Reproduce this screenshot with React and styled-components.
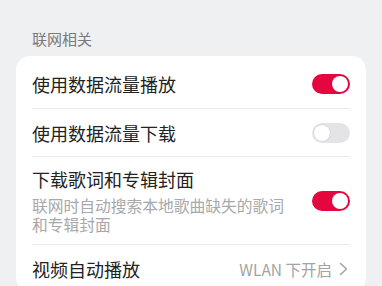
import React from "react";
import styled, { createGlobalStyle } from "styled-components";

const Global = createGlobalStyle`
  html, body { margin: 0; padding: 0; background: #eff0f2; }
  body {
    font-family: "Noto Sans CJK SC", "Noto Sans", sans-serif;
    -webkit-font-smoothing: antialiased;
  }
`;

const Page = styled.div`
  width: 382px;
  height: 286px;
  overflow: hidden;
  padding: 0 16px;
  box-sizing: border-box;
  background: #eff0f2;
`;

const SectionLabel = styled.div`
  padding: 28px 16px 6px;
  font-size: 15px;
  line-height: 22px;
  color: #7a7a7c;
`;

const Card = styled.div`
  background: #fff;
  border-radius: 14px;
  padding: 4px 16px 0;
`;

const Row = styled.div`
  display: flex;
  align-items: center;
  gap: 12px;
  min-height: ${(p) => (p.$tall ? 86 : 48)}px;
  box-sizing: border-box;
  padding: ${(p) => (p.$tall ? "10px 0" : "0")};
  border-top: ${(p) => (p.$first ? "none" : "1px solid #ececec")};
`;

const Texts = styled.div`
  flex: 1;
  min-width: 0;
  display: flex;
  flex-direction: column;
`;

const Title = styled.div`
  font-size: 18px;
  line-height: 24px;
  color: #222;
`;

const Sub = styled.div`
  margin-top: 6px;
  font-size: 15.75px;
  line-height: 18.5px;
  color: #a8a8aa;
  max-width: 264px;
`;

const Track = styled.div`
  position: relative;
  flex: none;
  width: 38px;
  height: 20px;
  border-radius: 10px;
  background: ${(p) => (p.$on ? "#e6063f" : "#e4e4e6")};
`;

const Knob = styled.div`
  position: absolute;
  top: 2px;
  left: ${(p) => (p.$on ? "20px" : "2px")};
  width: 16px;
  height: 16px;
  border-radius: 50%;
  background: #fff;
  box-shadow: 0 0 0 0.5px rgba(0, 0, 0, 0.12);
`;

const Value = styled.div`
  display: flex;
  align-items: center;
  gap: 6px;
  font-size: 15.5px;
  color: #a3a3a5;
  flex: none;
  margin-right: 2px;
`;

const Toggle = ({ on }) => (
  <Track $on={on}>
    <Knob $on={on} />
  </Track>
);

const Chevron = () => (
  <svg width="10" height="14" viewBox="0 0 10 14">
    <polyline
      points="2.5,1.5 8.5,7 2.5,12.5"
      fill="none"
      stroke="#a3a3a5"
      strokeWidth="1.6"
      strokeLinecap="round"
      strokeLinejoin="round"
    />
  </svg>
);

export default function App() {
  return (
    <Page>
      <Global />
      <SectionLabel>联网相关</SectionLabel>
      <Card>
        <Row $first>
          <Texts>
            <Title>使用数据流量播放</Title>
          </Texts>
          <Toggle on />
        </Row>
        <Row>
          <Texts>
            <Title>使用数据流量下载</Title>
          </Texts>
          <Toggle on={false} />
        </Row>
        <Row $tall>
          <Texts>
            <Title>下载歌词和专辑封面</Title>
            <Sub>联网时自动搜索本地歌曲缺失的歌词和专辑封面</Sub>
          </Texts>
          <Toggle on />
        </Row>
        <Row>
          <Texts>
            <Title>视频自动播放</Title>
          </Texts>
          <Value>
            WLAN 下开启
            <Chevron />
          </Value>
        </Row>
      </Card>
    </Page>
  );
}
